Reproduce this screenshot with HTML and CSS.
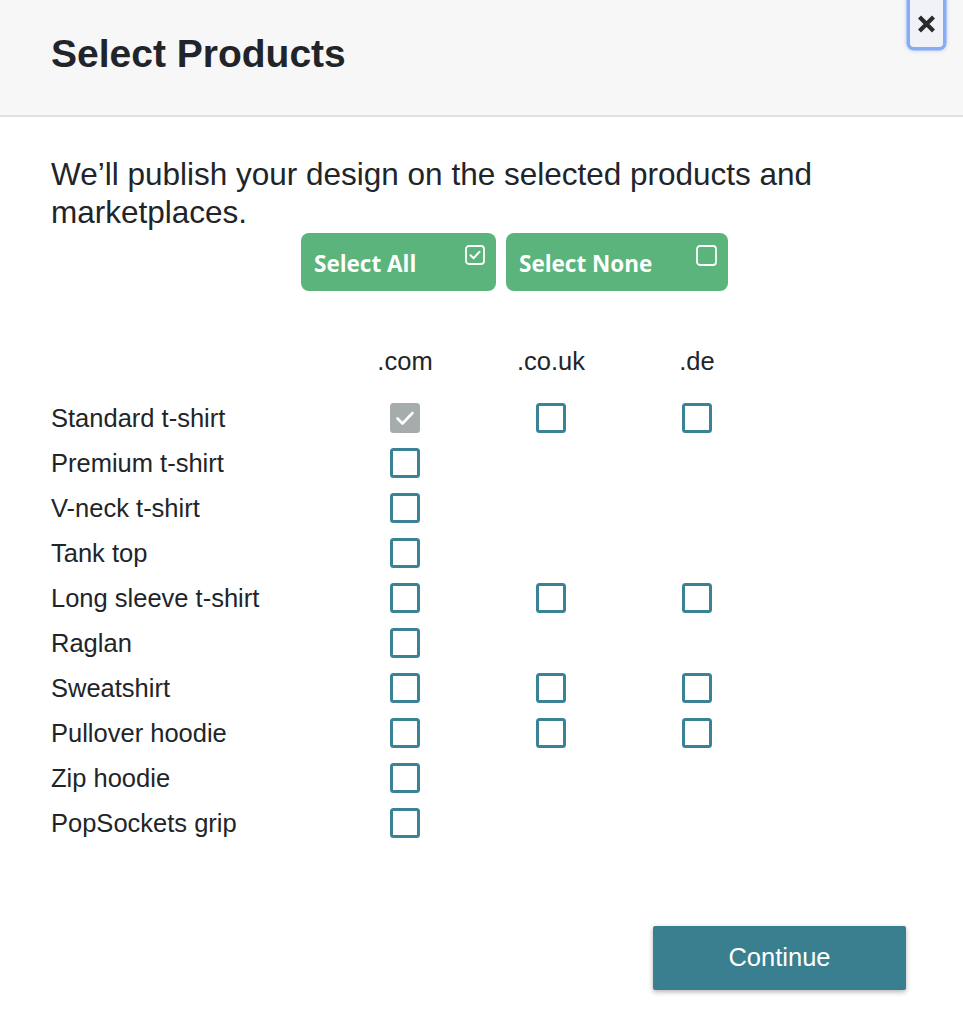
FILE: index.html
```html
<!DOCTYPE html>
<html lang="en">
<head>
<meta charset="utf-8">
<title>Select Products</title>
<link rel="stylesheet" href="styles.css">
</head>
<body>
<div class="modal">
  <header class="modal-header">
    <h1 class="modal-title">Select Products</h1>
    <button class="close-btn" aria-label="Close">
      <svg width="19" height="18" viewBox="0 0 19 18"><path d="M2.5 2 L16.5 16 M16.5 2 L2.5 16" stroke="#2b2b2b" stroke-width="4.2" stroke-linecap="butt"/></svg>
    </button>
  </header>
  <div class="modal-body">
    <p class="intro">We’ll publish your design on the selected products and marketplaces.</p>
    <div class="select-btns">
      <button class="sel-btn sel-all">
        <span class="sel-label">Select All</span>
        <svg class="sel-icon" width="20" height="20" viewBox="0 0 20 20"><rect x="1" y="1" width="18" height="18" rx="3" fill="none" stroke="#fff" stroke-width="1.8"/><path d="M5.5 10.2 L8.6 13.2 L14.5 6.8" fill="none" stroke="#fff" stroke-width="2" stroke-linecap="round" stroke-linejoin="round"/></svg>
      </button>
      <button class="sel-btn sel-none">
        <span class="sel-label">Select None</span>
        <svg class="sel-icon" width="21" height="21" viewBox="0 0 21 21"><rect x="1" y="1" width="19" height="19" rx="3" fill="none" stroke="#fff" stroke-width="1.8"/></svg>
      </button>
    </div>
    <div class="grid">
      <div class="cell head"></div>
      <div class="cell head mid">.com</div>
      <div class="cell head mid">.co.uk</div>
      <div class="cell head mid">.de</div>

      <div class="cell label">Standard t-shirt</div>
      <div class="cell mid"><span class="cb checked"><svg width="30" height="30" viewBox="0 0 30 30"><path d="M7.5 15.5 L12.5 20.5 L22.5 10" fill="none" stroke="#fff" stroke-width="2.6" stroke-linecap="round" stroke-linejoin="round"/></svg></span></div>
      <div class="cell mid"><span class="cb"></span></div>
      <div class="cell mid"><span class="cb"></span></div>

      <div class="cell label">Premium t-shirt</div>
      <div class="cell mid"><span class="cb"></span></div>
      <div class="cell"></div>
      <div class="cell"></div>

      <div class="cell label">V-neck t-shirt</div>
      <div class="cell mid"><span class="cb"></span></div>
      <div class="cell"></div>
      <div class="cell"></div>

      <div class="cell label">Tank top</div>
      <div class="cell mid"><span class="cb"></span></div>
      <div class="cell"></div>
      <div class="cell"></div>

      <div class="cell label">Long sleeve t-shirt</div>
      <div class="cell mid"><span class="cb"></span></div>
      <div class="cell mid"><span class="cb"></span></div>
      <div class="cell mid"><span class="cb"></span></div>

      <div class="cell label">Raglan</div>
      <div class="cell mid"><span class="cb"></span></div>
      <div class="cell"></div>
      <div class="cell"></div>

      <div class="cell label">Sweatshirt</div>
      <div class="cell mid"><span class="cb"></span></div>
      <div class="cell mid"><span class="cb"></span></div>
      <div class="cell mid"><span class="cb"></span></div>

      <div class="cell label">Pullover hoodie</div>
      <div class="cell mid"><span class="cb"></span></div>
      <div class="cell mid"><span class="cb"></span></div>
      <div class="cell mid"><span class="cb"></span></div>

      <div class="cell label">Zip hoodie</div>
      <div class="cell mid"><span class="cb"></span></div>
      <div class="cell"></div>
      <div class="cell"></div>

      <div class="cell label">PopSockets grip</div>
      <div class="cell mid"><span class="cb"></span></div>
      <div class="cell"></div>
      <div class="cell"></div>
    </div>
    <div class="footer">
      <button class="continue-btn">Continue</button>
    </div>
  </div>
</div>
</body>
</html>
```

FILE: styles.css
```css
html, body {
  margin: 0;
  padding: 0;
  background: #ffffff;
}
body {
  font-family: "Liberation Sans", Arial, Helvetica, sans-serif;
  color: #212529;
  width: 963px;
  overflow: hidden;
}
.modal {
  width: 963px;
}
.modal-header {
  position: relative;
  background: #f7f7f7;
  border-bottom: 2px solid #dfe2e5;
  padding: 31px 51px 39px;
}
.modal-title {
  margin: 0;
  font-size: 39px;
  line-height: 45px;
  font-weight: 700;
  color: #212529;
}
.close-btn {
  position: absolute;
  top: -8px;
  right: 20px;
  width: 33px;
  height: 55px;
  padding: 23px 0 0;
  margin: 0;
  border: none;
  border-radius: 4px;
  background: #f1f2f7;
  box-shadow: 0 0 0 3.5px rgba(115, 158, 245, 0.8), 0 0 3px 5px rgba(140, 175, 245, 0.3);
  display: flex;
  justify-content: center;
  align-items: flex-start;
}
.modal-body {
  padding: 38px 51px 30px;
}
.intro {
  margin: 0;
  font-size: 31.5px;
  line-height: 38px;
  color: #212529;
}
.select-btns {
  display: flex;
  gap: 10px;
  margin-top: 2px;
  padding-left: 250px;
}
.sel-btn {
  height: 58px;
  border: none;
  border-radius: 8px;
  background: #5ab47b;
  color: #ffffff;
  display: flex;
  justify-content: space-between;
  align-items: center;
  padding: 0 11px 0 13px;
  font-family: "Open Sans", sans-serif;
  font-weight: 700;
  font-size: 22.5px;
  cursor: pointer;
}
.sel-all { width: 195px; }
.sel-none { width: 222px; }
.sel-label {
  line-height: 1;
  margin-top: 4px;
}
.sel-icon {
  align-self: flex-start;
  margin-top: 12px;
}
.grid {
  display: grid;
  grid-template-columns: 281px 146px 146px 146px;
  grid-template-rows: 57px;
  grid-auto-rows: 45px;
  margin-top: 47.5px;
  font-size: 25.5px;
}
.cell {
  display: flex;
  align-items: center;
  line-height: 45px;
}
.grid .head {
  align-items: flex-start;
}
.mid {
  justify-content: center;
}
.cb {
  display: block;
  box-sizing: border-box;
  width: 30px;
  height: 30px;
  border: 3px solid #3a8396;
  border-radius: 3.5px;
  background: #fff;
}
.cb.checked {
  border: none;
  background: #a6acab;
}
.cb svg {
  display: block;
}
.footer {
  display: flex;
  justify-content: flex-end;
  padding-right: 6px;
  margin-top: 80px;
}
.continue-btn {
  width: 253px;
  height: 64px;
  border: none;
  border-radius: 2px;
  background: #3a7f8f;
  color: #ffffff;
  font-family: "Liberation Sans", Arial, sans-serif;
  font-size: 25.5px;
  box-shadow: 0 2px 5px rgba(0, 0, 0, 0.3);
  cursor: pointer;
}
```
